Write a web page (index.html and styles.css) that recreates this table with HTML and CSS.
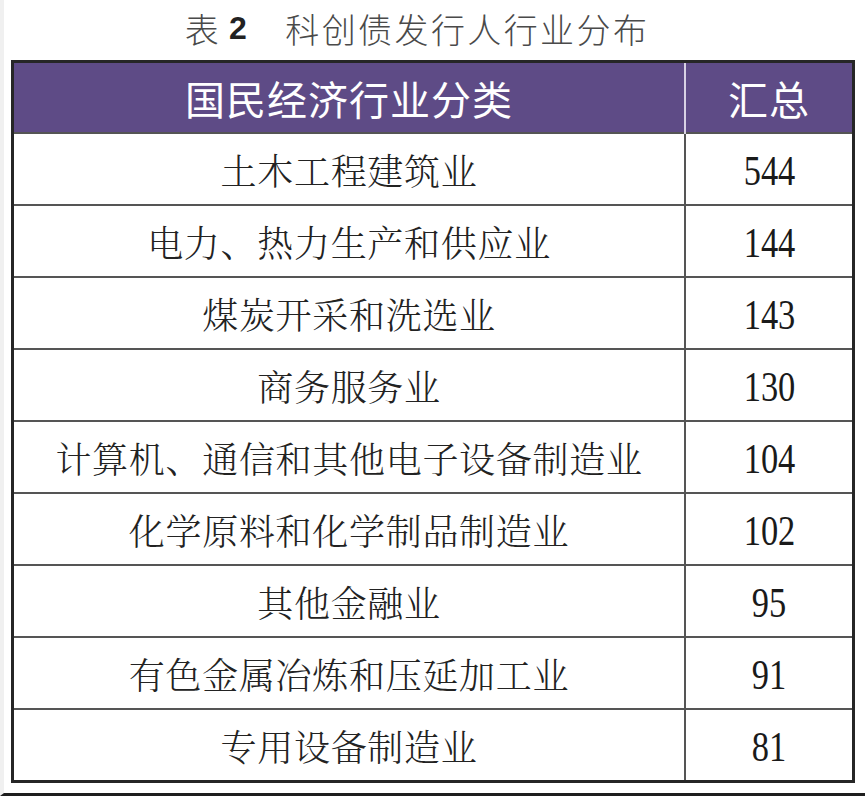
FILE: index.html
```html
<!DOCTYPE html>
<html lang="zh-CN">
<head>
<meta charset="utf-8">
<title>表2 科创债发行人行业分布</title>
<link rel="stylesheet" href="styles.css">
</head>
<body>
<div class="page">
  <h1 class="title"><span class="t-label">表</span><span class="t-num">2</span><span class="t-text">科创债发行人行业分布</span></h1>
  <table class="grid">
    <thead>
      <tr><th class="c-name">国民经济行业分类</th><th class="c-val">汇总</th></tr>
    </thead>
    <tbody>
      <tr><td class="c-name">土木工程建筑业</td><td class="c-val"><span class="num">544</span></td></tr>
      <tr><td class="c-name">电力、热力生产和供应业</td><td class="c-val"><span class="num">144</span></td></tr>
      <tr><td class="c-name">煤炭开采和洗选业</td><td class="c-val"><span class="num">143</span></td></tr>
      <tr><td class="c-name">商务服务业</td><td class="c-val"><span class="num">130</span></td></tr>
      <tr><td class="c-name">计算机、通信和其他电子设备制造业</td><td class="c-val"><span class="num">104</span></td></tr>
      <tr><td class="c-name">化学原料和化学制品制造业</td><td class="c-val"><span class="num">102</span></td></tr>
      <tr><td class="c-name">其他金融业</td><td class="c-val"><span class="num">95</span></td></tr>
      <tr><td class="c-name">有色金属冶炼和压延加工业</td><td class="c-val"><span class="num">91</span></td></tr>
      <tr><td class="c-name">专用设备制造业</td><td class="c-val"><span class="num">81</span></td></tr>
    </tbody>
  </table>
</div>
</body>
</html>
```
FILE: styles.css
```css
html, body {
  margin: 0;
  padding: 0;
  background: #ffffff;
}
.page {
  width: 865px;
  height: 796px;
  box-sizing: border-box;
  border-left: 4px solid #f0f0f0;
  border-bottom: 3px solid #1e1e1e;
  padding: 0 0 0 7px;
  overflow: hidden;
}
.title {
  margin: 0;
  height: 60px;
  width: 842px;
  display: flex;
  align-items: center;
  justify-content: center;
  padding: 0 30px 4px 0;
  box-sizing: border-box;
  font-family: "Noto Sans CJK SC", "Noto Sans", sans-serif;
  font-weight: 300;
  font-size: 34px;
  color: #4a4a4a;
  letter-spacing: 2.4px;
}
.t-num {
  font-family: "Liberation Sans", Arial, sans-serif;
  font-weight: 700;
  font-size: 32px;
  margin-left: 8px;
  margin-right: 36px;
  color: #222;
}
.grid {
  width: 842px;
  border-collapse: collapse;
  border: 3px solid #262626;
  table-layout: fixed;
}
.grid th, .grid td {
  padding: 0;
  text-align: center;
  vertical-align: middle;
}
.grid th {
  background: #5e4b86;
  color: #ffffff;
  height: 69px;
  font-family: "Noto Sans CJK SC", "Noto Sans", sans-serif;
  font-weight: 400;
  font-size: 40px;
  letter-spacing: 1px;
  border-right: 2px solid #d8d2e4;
}
.grid th.c-val {
  border-right: 3px solid #262626;
}
.grid td {
  height: 70px;
  border: 2px solid #555555;
  font-family: "Noto Serif CJK SC", "Noto Sans CJK SC", serif;
  font-weight: 300;
  font-size: 36px;
  letter-spacing: 0.7px;
  color: #222222;
}
.grid .c-name {
  width: 670px;
}
.grid .c-val {
  width: 166px;
}
.num {
  display: inline-block;
  font-family: "Liberation Serif", "Times New Roman", serif;
  font-size: 42px;
  letter-spacing: 0;
  transform: scaleX(0.82);
  color: #1a1a1a;
}
```
